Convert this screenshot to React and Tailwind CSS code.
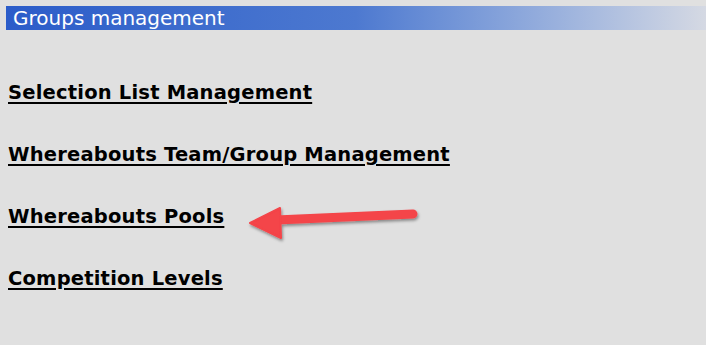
import React from 'react';

const links = [
  'Selection List Management',
  'Whereabouts Team/Group Management',
  'Whereabouts Pools',
  'Competition Levels',
];

const App = () => {
  return (
    <div className="relative w-[706px] h-[345px] overflow-hidden bg-[#e0e0e0]" style={{ fontFamily: '"DejaVu Sans", Verdana, sans-serif' }}>
      {/* Titelbalken */}
      <div className="pt-[6px] pl-[6px]">
        <div className="h-[24px] flex items-center pl-[7px] bg-gradient-to-r from-[#2b5cc9] via-[#4d79d0] via-50% to-[#d5d9e3] text-white text-[20px] leading-none">
          Groups management
        </div>
      </div>

      {/* Links */}
      <ul className="flex flex-col gap-[38px] pl-[8px] pt-[51px]">
        {links.map((l) => (
          <li key={l} className="h-[24px]">
            <a href="#" className="text-black font-bold text-[19.5px] tracking-[0.2px] leading-[24px] underline underline-offset-[3px] decoration-[2px]">
              {l}
            </a>
          </li>
        ))}
      </ul>

      {/* Pfeil */}
      <svg className="absolute left-[240px] top-[198px]" width="190" height="50" viewBox="0 0 190 50">
        <defs>
          <filter id="sh" x="-10%" y="-30%" width="130%" height="170%">
            <feDropShadow dx="1" dy="2" stdDeviation="1.5" floodColor="#000" floodOpacity="0.4" />
          </filter>
        </defs>
        <g filter="url(#sh)" fill="#f44448" stroke="#f44448">
          <line x1="36" y1="22" x2="173" y2="16" strokeWidth="9" strokeLinecap="round" />
          <polygon points="10,25 40,10 41,40" strokeWidth="2" strokeLinejoin="round" />
        </g>
      </svg>
    </div>
  );
};

export default App;
